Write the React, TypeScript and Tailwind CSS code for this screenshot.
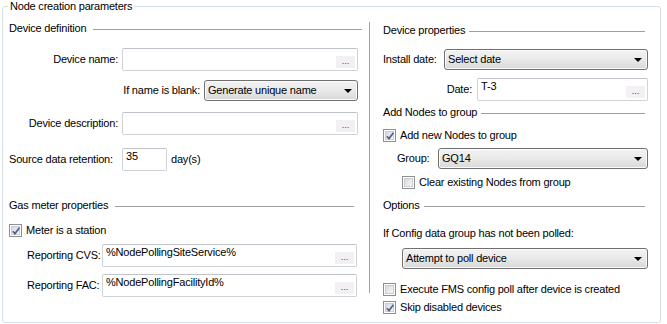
import React from 'react';

type HeadingProps = { title: string; gap?: string; className?: string };

const SectionHeading = ({ title, gap = 'gap-[7px]', className = '' }: HeadingProps) => (
  <div className={`flex h-[13px] items-center ${gap} ${className}`}>
    <span className="whitespace-nowrap leading-[13px]">{title}</span>
    <div className="mt-[2px] h-px flex-1 bg-[#a0a0a0]" />
  </div>
);

type FieldProps = { value?: string; ellipsis?: boolean; className?: string };

const TextField = ({ value = '', ellipsis = true, className = '' }: FieldProps) => (
  <div
    className={`relative h-[23px] shrink-0 rounded-[2px] border border-[#cfd2d7] border-t-[#bfc3c9] bg-white pl-[3px] pt-[1px] leading-[13px] ${className}`}
  >
    {value}
    {ellipsis && (
      <span className="absolute bottom-[2px] right-[2px] flex h-[12px] w-[19px] items-center justify-center bg-[#f3f0f4] pb-[2px] text-[9px] leading-none tracking-normal text-[#3c3c55]">
        ...
      </span>
    )}
  </div>
);

type SelectProps = { value: string; className?: string };

const Select = ({ value, className = '' }: SelectProps) => (
  <div
    className={`flex h-[21px] shrink-0 items-center justify-between rounded-[3px] border border-[#707070] bg-gradient-to-b from-[#f3f3f3] via-[#e9e9e9] to-[#d8d8d8] pl-[3px] pr-[5px] shadow-[inset_0_0_0_1px_#fbfbfb] ${className}`}
  >
    <span className="leading-[13px]">{value}</span>
    <svg width="8" height="4" viewBox="0 0 8 4">
      <path d="M0 0h8L4 4z" fill="#000" />
    </svg>
  </div>
);

type CheckProps = { checked?: boolean; label: string; className?: string };

const Checkbox = ({ checked = false, label, className = '' }: CheckProps) => (
  <div className={`flex h-[13px] items-center gap-[4px] ${className}`}>
    <span className="relative flex h-[13px] w-[13px] shrink-0 items-center justify-center border border-[#8e8f8f] bg-white">
      <span className="h-[9px] w-[9px] border border-[#c9ccd2] bg-gradient-to-br from-[#d6d9de] to-[#f7f7f8]" />
      {checked && (
        <svg className="absolute left-[1px] top-[1px]" width="10" height="10" viewBox="0 0 10 10">
          <path d="M1.8 5.2 L4 7.6 L8.4 1.8" fill="none" stroke="#4e6190" strokeWidth="1.7" />
        </svg>
      )}
    </span>
    <span className="whitespace-nowrap leading-[13px]">{label}</span>
  </div>
);

export default function App() {
  return (
    <div className="h-[324px] w-[667px] bg-white pl-[2px] font-['Liberation_Sans',Arial,sans-serif] text-[11px] tracking-[-0.2px] text-black">
      <fieldset className="h-[323px] w-[659px] rounded-[3px] border border-[#d5dfe5]">
        <legend className="ml-[5px] px-[2px] leading-[13px]">Node creation parameters</legend>
        <div className="flex pl-[6px]">
          {/* left column */}
          <div className="flex w-[353px] flex-col">
            <SectionHeading title="Device definition" className="mt-[9px]" />
            <div className="mt-[13px] flex items-center gap-[4px]">
              <span className="w-[109px] whitespace-nowrap text-right">Device name:</span>
              <TextField className="w-[236px]" />
            </div>
            <div className="mt-[9px] flex w-[349px] items-center justify-end gap-[4px]">
              <span className="whitespace-nowrap">If name is blank:</span>
              <Select value="Generate unique name" className="w-[154px]" />
            </div>
            <div className="mt-[11px] flex items-center gap-[4px]">
              <span className="w-[109px] whitespace-nowrap text-right">Device description:</span>
              <TextField className="w-[236px]" />
            </div>
            <div className="mt-[13px] flex items-center">
              <span className="w-[113px] shrink-0 whitespace-nowrap">Source data retention:</span>
              <TextField value="35" ellipsis={false} className="w-[45px]" />
              <span className="ml-[4px]">day(s)</span>
            </div>
            <SectionHeading title="Gas meter properties" className="mt-[28px] w-[345px]" />
            <Checkbox checked label="Meter is a station" className="mt-[12px]" />
            <div className="mt-[7px] flex items-center pl-[18px]">
              <span className="w-[75px] shrink-0 whitespace-nowrap">Reporting CVS:</span>
              <TextField value="%NodePollingSiteService%" className="w-[255px]" />
            </div>
            <div className="mt-[7px] flex items-center pl-[18px]">
              <span className="w-[75px] shrink-0 whitespace-nowrap">Reporting FAC:</span>
              <TextField value="%NodePollingFacilityId%" className="w-[255px]" />
            </div>
          </div>

          <div className="ml-[7px] mt-[9px] h-[271px] w-px shrink-0 bg-[#a0a0a0]" />

          {/* right column */}
          <div className="ml-[13px] flex w-[265px] flex-col">
            <SectionHeading title="Device properties" gap="gap-[4px]" className="mt-[11px] w-[262px]" />
            <div className="mt-[12px] flex items-center">
              <span className="w-[61px] shrink-0 whitespace-nowrap">Install date:</span>
              <Select value="Select date" className="w-[204px]" />
            </div>
            <div className="mt-[8px] flex items-center justify-end gap-[5px]">
              <span>Date:</span>
              <TextField value="T-3" className="w-[171px]" />
            </div>
            <SectionHeading title="Add Nodes to group" gap="gap-[4px]" className="mt-[5px] w-[262px]" />
            <Checkbox checked label="Add new Nodes to group" className="mt-[10px]" />
            <div className="mt-[6px] flex items-center pl-[14px]">
              <span className="w-[41px] shrink-0">Group:</span>
              <Select value="GQ14" className="w-[210px]" />
            </div>
            <Checkbox label="Clear existing Nodes from group" className="mt-[7px] pl-[19px]" />
            <SectionHeading title="Options" gap="gap-[4px]" className="mt-[10px] w-[262px]" />
            <div className="mt-[15px] whitespace-nowrap leading-[13px]">If Config data group has not been polled:</div>
            <div className="mt-[8px] pl-[19px]">
              <Select value="Attempt to poll device" className="w-[246px]" />
            </div>
            <Checkbox label="Execute FMS config poll after device is created" className="mt-[14px]" />
            <Checkbox checked label="Skip disabled devices" className="mt-[5px]" />
          </div>
        </div>
      </fieldset>
    </div>
  );
}
